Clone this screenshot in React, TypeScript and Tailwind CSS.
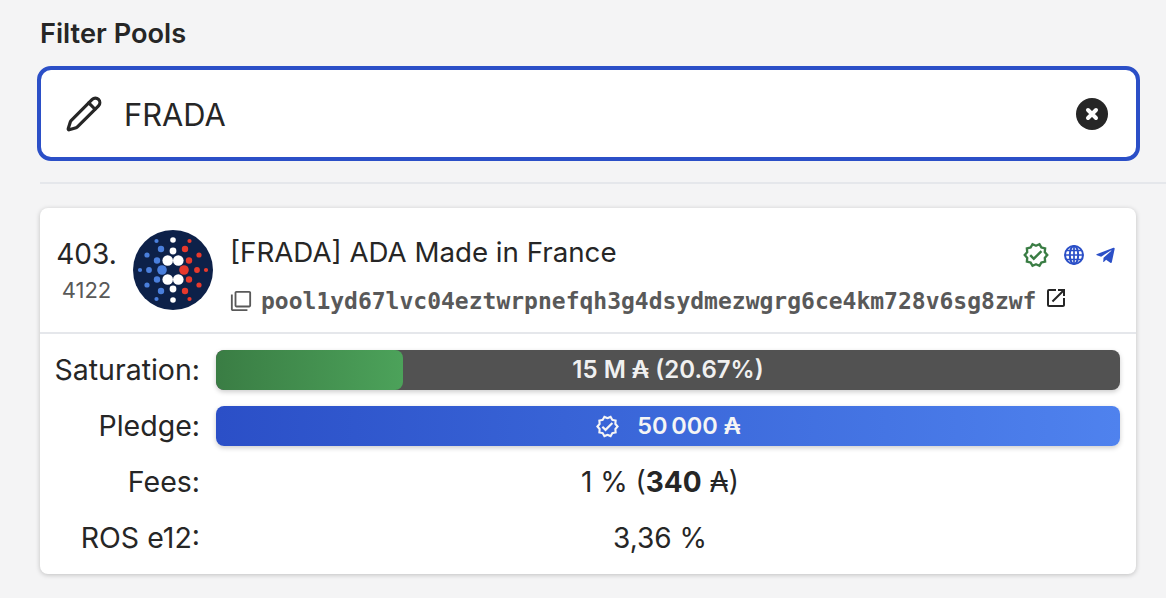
import { Pencil } from "lucide-react";
import { FaTelegramPlane } from "react-icons/fa";
import { MdOpenInNew, MdOutlineFilterNone, MdOutlineVerified } from "react-icons/md";

const blueDots = [
  [-11, 0, 4.8],
  [-16, -9.5, 3.2],
  [-16, 9.5, 3.2],
  [-24, 0, 2.9],
  [-33, 0, 2.1],
  [-12, -21, 3.2],
  [-12, 21, 3.2],
  [-26, -15, 2.6],
  [-26, 15, 2.6],
  [-16.5, -29, 2.1],
  [-16.5, 29, 2.1],
];

const whiteDots = [
  [-5.3, -9.5, 5.3],
  [5.3, -9.5, 5.3],
  [-5.3, 9.5, 5.3],
  [5.3, 9.5, 5.3],
  [0, -19, 3.4],
  [0, 19, 3.4],
  [0, -30, 2.8],
  [0, 30, 2.8],
];

function PoolLogo() {
  return (
    <svg width="80" height="80" viewBox="-40 -40 80 80" className="shrink-0">
      <circle r="40" fill="#0d2149" />
      {blueDots.map(([x, y, r]) => (
        <circle key={`b${x}${y}`} cx={x} cy={y} r={r} fill="#4a7fdc" />
      ))}
      {blueDots.map(([x, y, r]) => (
        <circle key={`r${x}${y}`} cx={-x} cy={y} r={r} fill="#e8392c" />
      ))}
      {whiteDots.map(([x, y, r]) => (
        <circle key={`w${x}${y}`} cx={x} cy={y} r={r} fill="#ffffff" />
      ))}
    </svg>
  );
}

function GlobeIcon() {
  return (
    <svg width="22" height="22" viewBox="0 0 22 22" fill="none" stroke="currentColor" strokeWidth="2" className="ml-[13px] text-[#2b4fc7]">
      <circle cx="11" cy="11" r="9" />
      <ellipse cx="11" cy="11" rx="4.2" ry="9" />
      <path d="M11 2v18M2 11h18M3.5 6.5h15M3.5 15.5h15" strokeWidth="1.7" />
    </svg>
  );
}

function Row({ label, children }: { label: string; children: React.ReactNode }) {
  return (
    <div className="flex h-14 items-center">
      <div className="w-[160px] shrink-0 text-right text-[28.5px]">{label}</div>
      <div className="mx-4 flex-1 text-center">{children}</div>
    </div>
  );
}

export default function App() {
  return (
    <div className="h-[598px] overflow-hidden bg-[#f4f4f5] pl-10 font-['Inter',sans-serif] text-[#262626]">
      <h2 className="pt-[17px] text-[27.2px] leading-[34px] font-semibold">Filter Pools</h2>

      <div className="mt-[15px] -ml-[3px] mr-[26px] flex h-[95px] items-center rounded-[14px] border-4 border-[#2b4fc7] bg-white pr-[28px] pl-[24px]">
        <Pencil size={38} strokeWidth={2} className="shrink-0" />
        <span className="ml-[21px] flex-1 pt-[3px] text-[30.8px]">FRADA</span>
        <span className="flex h-8 w-8 items-center justify-center rounded-full bg-[#262626]">
          <svg width="16" height="16" viewBox="0 0 16 16">
            <path d="M4 4l8 8M12 4l-8 8" stroke="#ffffff" strokeWidth="4" strokeLinecap="round" />
          </svg>
        </span>
      </div>

      <div className="mt-[21px] h-[2px] bg-[#e5e7eb]" />

      <div className="mt-6 mr-[30px] rounded-lg bg-white text-[28px] shadow-[0_1px_5px_rgba(0,0,0,0.22)]">
        <div className="flex h-[126px] items-center border-b-2 border-[#e5e7eb] pl-4">
          <div className="w-[61px] shrink-0 text-center">
            <div className="text-[28px] leading-[34px]">403.</div>
            <div className="mt-[6px] text-[22px] leading-[26px] text-[#595959]">4122</div>
          </div>
          <div className="ml-4">
            <PoolLogo />
          </div>
          <div className="ml-[17px] flex-1 pt-[11px] pr-5">
            <div className="flex items-center justify-between">
              <span className="text-[27.7px] leading-[34px]">[FRADA] ADA Made in France</span>
              <span className="mt-[6px] flex items-center">
                <MdOutlineVerified size={28} className="text-[#3a7d44]" />
                <GlobeIcon />
                <FaTelegramPlane size={21} className="ml-[10px] text-[#2b4fc7]" />
              </span>
            </div>
            <div className="mt-[17px] flex items-center">
              <MdOutlineFilterNone size={22} className="shrink-0 text-[#595959]" />
              <span className="ml-[9px] font-['DejaVu_Sans_Mono',monospace] text-[23px] leading-[30px] font-bold text-[#595959]">
                pool1yd67lvc04eztwrpnefqh3g4dsydmezwgrg6ce4km728v6sg8zwf
              </span>
              <MdOpenInNew size={24} className="ml-2 -mt-[6px] shrink-0" />
            </div>
          </div>
        </div>

        <div className="py-2">
          <Row label="Saturation:">
            <div className="relative h-10 overflow-hidden rounded-lg bg-[#525252] shadow-[0_2px_5px_rgba(0,0,0,0.2)]">
              <div className="h-full w-[20.67%] rounded-lg bg-gradient-to-r from-[#3a7d44] to-[#4ca25a]" />
              <div className="absolute inset-0 flex items-center justify-center text-[24px] font-semibold text-[#f0f0f0]">
                15 M ₳ (20.67%)
              </div>
            </div>
          </Row>
          <Row label="Pledge:">
            <div className="flex h-10 items-center justify-center rounded-lg bg-gradient-to-r from-[#2b4fc7] to-[#4f82ee] text-[23.5px] font-semibold text-[#f5f5f5] shadow-[0_2px_5px_rgba(0,0,0,0.2)]">
              <MdOutlineVerified size={25} className="mr-[17px]" />
              50{"\u202f"}000 ₳
            </div>
          </Row>
          <Row label="Fees:">
            <div className="pr-4">
              1 % (<span className="font-bold">340</span> ₳)
            </div>
          </Row>
          <Row label="ROS e12:">
            <div className="pr-4">3,36 %</div>
          </Row>
        </div>
      </div>
    </div>
  );
}
